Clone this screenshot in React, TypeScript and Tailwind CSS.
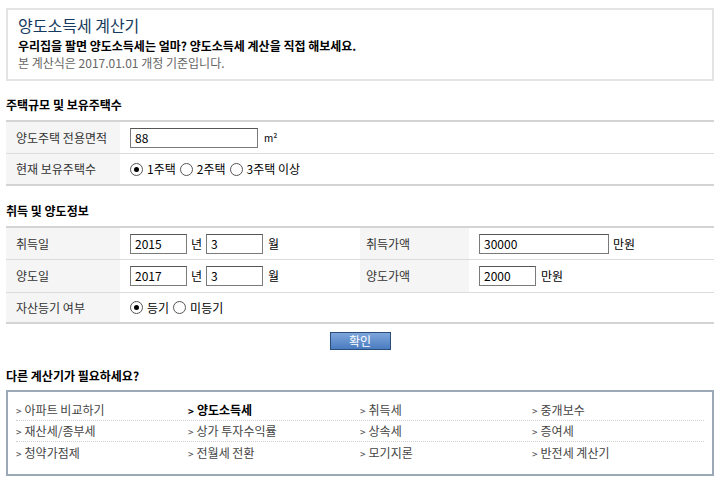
import React from 'react';

const font = { fontFamily: '"Noto Sans CJK KR", "Noto Sans", sans-serif' };

const Radio: React.FC<{ checked?: boolean; label: string }> = ({ checked, label }) => (
	<span className="inline-flex items-center">
		<span className="mr-[4px] flex h-[13px] w-[13px] items-center justify-center rounded-full border border-[#555] bg-white">
			{checked && <span className="h-[5px] w-[5px] rounded-full bg-black" />}
		</span>
		<span className="mr-[4px]">{label}</span>
	</span>
);

const Field: React.FC<{ value: string; width: string }> = ({ value, width }) => (
	<span
		className={`inline-block h-[20px] border border-[#7a7a7a] border-t-[#555] bg-white px-[4px] text-[12px] leading-[18px] text-black ${width}`}
	>
		{value}
	</span>
);

const links = [
	['아파트 비교하기', '양도소득세', '취득세', '중개보수'],
	['재산세/종부세', '상가 투자수익률', '상속세', '증여세'],
	['청약가점제', '전월세 전환', '모기지론', '반전세 계산기'],
];

export default function App() {
	return (
		<div className="w-[720px] bg-white px-[6px] pt-[8px] text-[12px] text-[#333]" style={font}>
			<div className="h-[73px] border-2 border-[#e4e4e4] px-[10px] pt-[5px]">
				<h1 className="text-[16px] leading-[20px] text-[#163a60]">양도소득세 계산기</h1>
				<p className="mt-[2px] text-[12px] leading-[17px] font-bold text-black">
					우리집을 팔면 양도소득세는 얼마? 양도소득세 계산을 직접 해보세요.
				</p>
				<p className="text-[12px] leading-[17px] text-[#666]">본 계산식은 2017.01.01 개정 기준입니다.</p>
			</div>

			<h2 className="mt-[16px] text-[12px] leading-[16px] font-bold text-black">주택규모 및 보유주택수</h2>
			<div className="mt-[7px] border-t-2 border-b-2 border-[#d4d4d4]">
				<div className="flex h-[32px] border-b border-[#dcdcdc]">
					<div className="flex w-[114px] items-center bg-[#f5f5f5] pl-[10px]">양도주택 전용면적</div>
					<div className="flex items-center pl-[10px]">
						<Field value="88" width="w-[128px]" />
						<span className="ml-[6px] text-[10px] text-black">m²</span>
					</div>
				</div>
				<div className="flex h-[30px]">
					<div className="flex w-[114px] items-center bg-[#f5f5f5] pl-[10px]">현재 보유주택수</div>
					<div className="flex items-center pl-[10px] text-black">
						<Radio checked label="1주택" />
						<Radio label="2주택" />
						<Radio label="3주택 이상" />
					</div>
				</div>
			</div>

			<h2 className="mt-[17px] text-[12px] leading-[16px] font-bold text-black">취득 및 양도정보</h2>
			<div className="mt-[7px] border-t-2 border-b-2 border-[#d4d4d4]">
				<div className="flex h-[32px] border-b border-[#dcdcdc]">
					<div className="flex w-[114px] items-center bg-[#f5f5f5] pl-[10px]">취득일</div>
					<div className="flex w-[240px] items-center pl-[10px] text-black">
						<Field value="2015" width="w-[57px]" />
						<span className="mx-[4px]">년</span>
						<Field value="3" width="w-[57px]" />
						<span className="ml-[5px]">월</span>
					</div>
					<div className="flex w-[109px] items-center bg-[#f5f5f5] pl-[6px]">취득가액</div>
					<div className="flex items-center pl-[10px] text-black">
						<Field value="30000" width="w-[130px]" />
						<span className="ml-[4px]">만원</span>
					</div>
				</div>
				<div className="flex h-[33px] border-b border-[#dcdcdc]">
					<div className="flex w-[114px] items-center bg-[#f5f5f5] pl-[10px]">양도일</div>
					<div className="flex w-[240px] items-center pl-[10px] text-black">
						<Field value="2017" width="w-[57px]" />
						<span className="mx-[4px]">년</span>
						<Field value="3" width="w-[57px]" />
						<span className="ml-[5px]">월</span>
					</div>
					<div className="flex w-[109px] items-center bg-[#f5f5f5] pl-[6px]">양도가액</div>
					<div className="flex items-center pl-[10px] text-black">
						<Field value="2000" width="w-[57px]" />
						<span className="ml-[5px]">만원</span>
					</div>
				</div>
				<div className="flex h-[29px]">
					<div className="flex w-[114px] items-center bg-[#f5f5f5] pl-[10px]">자산등기 여부</div>
					<div className="flex items-center pl-[10px] text-black">
						<Radio checked label="등기" />
						<Radio label="미등기" />
					</div>
				</div>
			</div>

			<div className="mt-[8px] flex justify-center">
				<button className="h-[18px] w-[61px] border border-[#2b4d7a] bg-gradient-to-b from-[#7ea6dc] to-[#4a7cc0] text-[12px] leading-[14px] text-white">
					확인
				</button>
			</div>

			<h2 className="mt-[18px] text-[12px] leading-[16px] font-bold text-black">다른 계산기가 필요하세요?</h2>
			<div className="mt-[6px] h-[86px] border-2 border-[#9aa8b8] px-[8px] pt-[8px]">
				{links.map((row, i) => (
					<div
						key={`row-${i}`}
						className={`grid h-[21px] grid-cols-4 items-center ${i < 2 ? 'border-b border-dotted border-[#d0d0d0]' : ''}`}
					>
						{row.map((name) => (
							<div key={name} className={name === '양도소득세' ? 'font-bold text-black' : 'text-[#444]'}>
								<span className="mr-[3px] text-[10px]">&gt;</span>
								{name}
							</div>
						))}
					</div>
				))}
			</div>
		</div>
	);
}
